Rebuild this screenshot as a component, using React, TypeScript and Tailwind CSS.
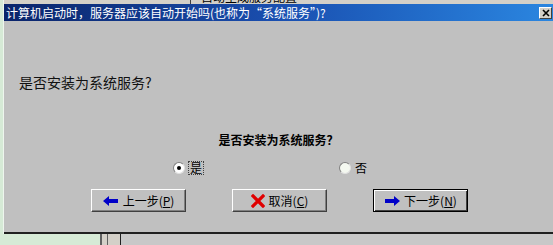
import React from "react";

const cjk = { fontFamily: '"Noto Sans CJK SC", "Noto Sans", sans-serif' };

function ArrowLeft() {
  return (
    <svg width="16" height="10" viewBox="0 0 16 10">
      <path d="M0 5 L6 0 L6 3 L15 3 L15 7 L6 7 L6 10 Z" fill="#0000c8" />
    </svg>
  );
}

function ArrowRight() {
  return (
    <svg width="16" height="10" viewBox="0 0 16 10">
      <path d="M16 5 L10 0 L10 3 L1 3 L1 7 L10 7 L10 10 Z" fill="#0000c8" />
    </svg>
  );
}

function RedX() {
  return (
    <svg width="14" height="14" viewBox="0 0 14 14">
      <path d="M2 2 L12 12 M12 2 L2 12" stroke="#e00000" strokeWidth="3.2" strokeLinecap="square" />
    </svg>
  );
}

function Button({
  children,
  primary,
}: {
  children: React.ReactNode;
  primary?: boolean;
}) {
  return (
    <button
      className={
        primary
          ? "w-[95px] h-[23px] bg-[#c0c0c0] border border-black shadow-[inset_1px_1px_0_#ffffff,inset_-1px_-1px_0_#404040] flex items-center justify-center gap-1 text-[12px] text-black"
          : "w-[95px] h-[23px] bg-[#c0c0c0] border-t border-l border-white border-r border-b border-r-[#404040] border-b-[#404040] shadow-[inset_-1px_-1px_0_#808080] flex items-center justify-center gap-1 text-[12px] text-black"
      }
      style={cjk}
    >
      {children}
    </button>
  );
}

export default function App() {
  return (
    <div className="w-[553px] h-[245px] overflow-hidden bg-[#d6ead6] flex flex-col" style={cjk}>
      <div className="flex h-[234px]">
        {/* left edge of background window */}
        <div className="w-[4px] bg-[#d6ead6] border-r border-[#eef6ee]" />
        <div className="flex-1 flex flex-col">
          {/* peek of window behind */}
          <div className="h-[4px] bg-[#d4d0c8] flex overflow-hidden">
            <div className="w-[186px]" />
            <div className="w-px bg-[#404040]" />
            <div className="ml-[10px] -mt-[9px] text-[12px] leading-[12px] text-black">自动生成服务配置</div>
          </div>
          {/* title bar */}
          <div className="h-[17px] bg-gradient-to-r from-[#0a246a] via-[#1a4fb0] to-[#2b86e0] flex items-center pl-[2px] pr-px">
            <span className="text-white text-[12px] leading-[14px] whitespace-nowrap">
              计算机启动时，服务器应该自动开始吗(也称为“系统服务”)?
            </span>
            <div className="ml-auto w-[13px] h-[12px] bg-[#d4d0c8] border-t border-l border-white border-r border-b border-r-[#404040] border-b-[#404040] flex items-center justify-center">
              <svg width="8" height="8" viewBox="0 0 8 8">
                <path d="M1 1 L7 7 M7 1 L1 7" stroke="#000" strokeWidth="1.6" />
              </svg>
            </div>
          </div>
          {/* dialog body */}
          <div className="flex-1 bg-[#c0c0c0] flex flex-col border-b-2 border-[#202020]">
            <div className="mt-[54px] ml-[15px] text-[14px] leading-[14px] text-[#111]">
              是否安装为系统服务?
            </div>
            <div className="mt-[44px] flex justify-center">
              <div className="text-[12px] leading-[14px] font-bold text-black">是否安装为系统服务？</div>
            </div>
            <div className="mt-[14px] flex items-center h-[14px]">
              <div className="ml-[169px] flex items-center gap-[4px]">
                <div className="w-[12px] h-[12px] rounded-full bg-white border border-t-[#808080] border-l-[#808080] border-r-[#e0e0e0] border-b-[#e0e0e0] flex items-center justify-center">
                  <div className="w-[4px] h-[4px] rounded-full bg-black" />
                </div>
                <span className="text-[12px] leading-[12px] outline outline-1 outline-dotted outline-[#404040] px-px">是</span>
              </div>
              <div className="ml-[136px] flex items-center gap-[4px]">
                <div className="w-[12px] h-[12px] rounded-full bg-[#f4f8f0] border border-t-[#808080] border-l-[#808080] border-r-[#e0e0e0] border-b-[#e0e0e0]" />
                <span className="text-[12px] leading-[12px]">否</span>
              </div>
            </div>
            <div className="mt-[14px] flex gap-[46px] ml-[87px]">
              <Button>
                <ArrowLeft />
                <span>上一步(<u>P</u>)</span>
              </Button>
              <Button>
                <RedX />
                <span>取消(<u>C</u>)</span>
              </Button>
              <Button primary>
                <ArrowRight />
                <span>下一步(<u>N</u>)</span>
              </Button>
            </div>
          </div>
        </div>
      </div>
      {/* background window below */}
      <div className="flex-1 flex">
        <div className="w-[100px] bg-[#d6ead6]" />
        <div className="w-[2px] bg-[#606060]" />
        <div className="w-[5px] bg-[#d4d0c8]" />
        <div className="w-px bg-[#606060]" />
        <div className="w-[12px] bg-[#d4d0c8]" />
        <div className="w-px bg-[#202020]" />
        <div className="flex-1 bg-[#c8c8c8]" />
      </div>
    </div>
  );
}
